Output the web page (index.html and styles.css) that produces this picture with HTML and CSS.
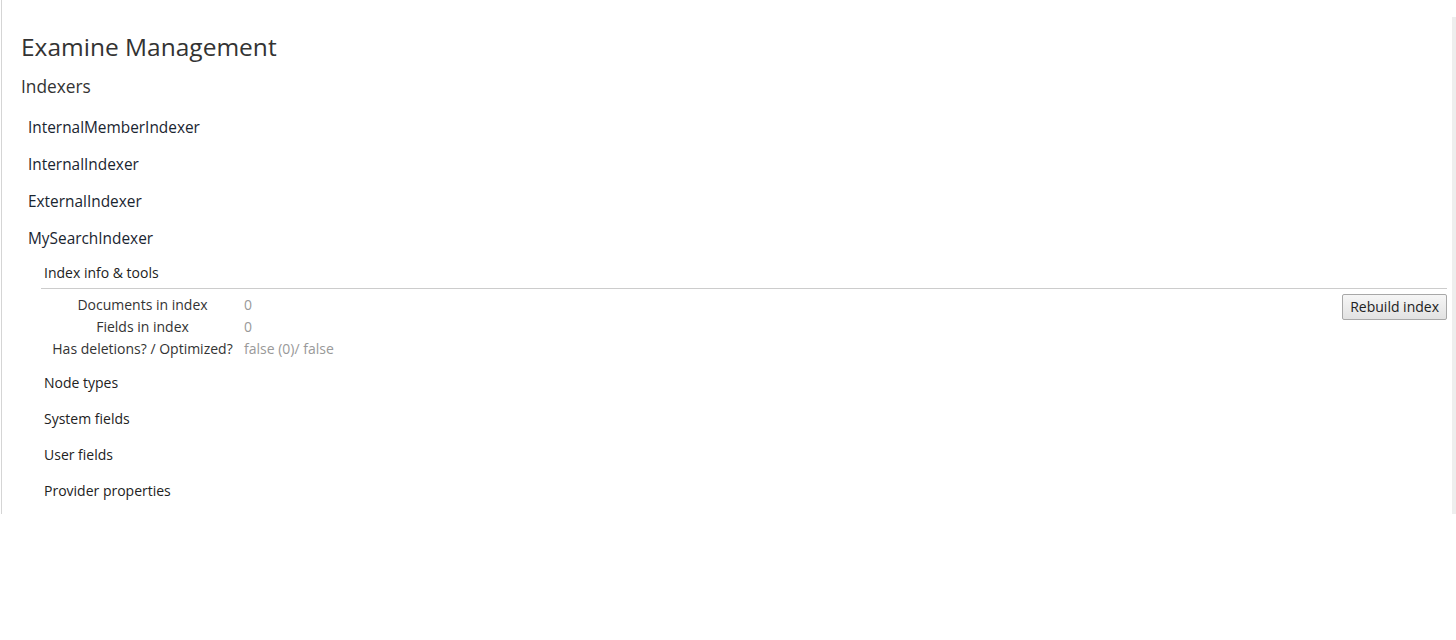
FILE: index.html
```html
<!DOCTYPE html>
<html lang="en">
<head>
    <meta charset="UTF-8">
    <title>Examine Management</title>
    <link rel="stylesheet" href="styles.css">
</head>
<body>

    <div class="pane">
        <div class="content">
            <h1>Examine Management</h1>
            <h2>Indexers</h2>

            <ul class="indexers">
                <li><a href="#">InternalMemberIndexer</a></li>
                <li><a href="#">InternalIndexer</a></li>
                <li><a href="#">ExternalIndexer</a></li>
                <li class="open">
                    <a href="#">MySearchIndexer</a>

                    <div class="section">
                        <div class="section-title expanded">Index info &amp; tools</div>
                        <div class="section-body">
                            <table class="info">
                                <tr><th>Documents in index</th><td>0</td></tr>
                                <tr><th>Fields in index</th><td>0</td></tr>
                                <tr><th>Has deletions? / Optimized?</th><td>false (0)/ false</td></tr>
                            </table>
                            <button class="btn">Rebuild index</button>
                        </div>
                    </div>

                    <div class="section"><div class="section-title">Node types</div></div>
                    <div class="section"><div class="section-title">System fields</div></div>
                    <div class="section"><div class="section-title">User fields</div></div>
                    <div class="section"><div class="section-title">Provider properties</div></div>
                </li>
            </ul>
        </div>
        <div class="scroll"></div>
    </div>

</body>
</html>
```

FILE: styles.css
```css
body {
    font-family: "Open Sans", Arial, sans-serif;
    margin: 0;
    padding: 0;
    background-color: white;
    color: #333;
}
.pane {
    display: flex;
    margin-left: 1px;
    height: 514px;
    border-left: 1px solid #d5d5d5;
}
.content {
    flex: 1;
    padding: 30px 5px 0 19px;
}
.scroll {
    width: 4px;
    margin-top: 17px;
    background-color: #eee;
}
h1 {
    margin: 0;
    font-size: 24.5px;
    font-weight: normal;
    line-height: 34px;
}
h2 {
    margin: 11px 0 0;
    font-size: 17.3px;
    font-weight: normal;
    line-height: 24px;
}
.indexers {
    list-style: none;
    margin: 19px 0 0;
    padding: 0 0 0 7px;
}
.indexers li > a {
    display: block;
    font-size: 15.4px;
    line-height: 19px;
    color: #1a2530;
    text-decoration: none;
    margin-bottom: 18px;
}
.indexers li.open > a {
    margin-bottom: 15px;
}
.section {
    margin-left: 13px;
}
.section-title {
    padding-left: 3px;
    font-size: 14px;
    line-height: 19px;
    color: #222;
    margin-bottom: 17px;
}
.section-title.expanded {
    margin-bottom: 0;
}
.section-body {
    display: flex;
    justify-content: space-between;
    align-items: flex-start;
    border-top: 1px solid #ccc;
    margin-top: 6px;
    padding-top: 5px;
    margin-bottom: 13px;
}
.info {
    border-collapse: collapse;
    font-size: 14px;
}
.info th {
    width: 203px;
    font-weight: normal;
    text-align: center;
    color: #333;
    padding: 0;
    line-height: 22px;
}
.info td {
    color: #999;
    padding: 0;
    line-height: 22px;
}
.btn {
    margin-top: 0;
    font-family: "Open Sans", Arial, sans-serif;
    font-size: 14px;
    color: #222;
    padding: 3px 7px;
    line-height: 18px;
    background: linear-gradient(#f6f6f6, #e2e2e2);
    border: 1px solid #a8a8a8;
    border-radius: 2px;
}
```
